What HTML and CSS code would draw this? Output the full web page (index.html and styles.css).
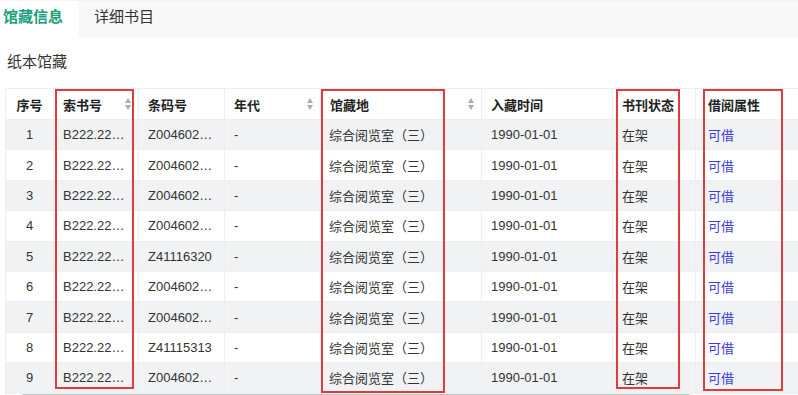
FILE: index.html
```html
<!DOCTYPE html>
<html lang="zh">
<head>
<meta charset="utf-8">
<title>馆藏信息</title>
<link rel="stylesheet" href="styles.css">
</head>
<body>
<div class="page">
  <div class="tabs">
    <div class="tab active">馆藏信息</div>
    <div class="tab">详细书目</div>
  </div>
  <div class="section-title">纸本馆藏</div>
  <div class="table-wrap">
    <table class="grid">
      <colgroup>
        <col class="c1"><col class="c2"><col class="c3"><col class="c4"><col class="c5"><col class="c6"><col class="c7"><col class="c8">
      </colgroup>
      <thead>
        <tr>
          <th class="center">序号</th>
          <th><div class="th-in"><span>索书号</span><span class="sort"></span></div></th>
          <th>条码号</th>
          <th><div class="th-in"><span>年代</span><span class="sort"></span></div></th>
          <th><div class="th-in"><span>馆藏地</span><span class="sort"></span></div></th>
          <th>入藏时间</th>
          <th>书刊状态</th>
          <th class="pl">借阅属性</th>
        </tr>
      </thead>
      <tbody>
        <tr><td class="center">1</td><td>B222.22…</td><td>Z004602…</td><td>-</td><td>综合阅览室（三）</td><td>1990-01-01</td><td>在架</td><td class="pl link">可借</td></tr>
        <tr><td class="center">2</td><td>B222.22…</td><td>Z004602…</td><td>-</td><td>综合阅览室（三）</td><td>1990-01-01</td><td>在架</td><td class="pl link">可借</td></tr>
        <tr><td class="center">3</td><td>B222.22…</td><td>Z004602…</td><td>-</td><td>综合阅览室（三）</td><td>1990-01-01</td><td>在架</td><td class="pl link">可借</td></tr>
        <tr><td class="center">4</td><td>B222.22…</td><td>Z004602…</td><td>-</td><td>综合阅览室（三）</td><td>1990-01-01</td><td>在架</td><td class="pl link">可借</td></tr>
        <tr><td class="center">5</td><td>B222.22…</td><td>Z41116320</td><td>-</td><td>综合阅览室（三）</td><td>1990-01-01</td><td>在架</td><td class="pl link">可借</td></tr>
        <tr><td class="center">6</td><td>B222.22…</td><td>Z004602…</td><td>-</td><td>综合阅览室（三）</td><td>1990-01-01</td><td>在架</td><td class="pl link">可借</td></tr>
        <tr><td class="center">7</td><td>B222.22…</td><td>Z004602…</td><td>-</td><td>综合阅览室（三）</td><td>1990-01-01</td><td>在架</td><td class="pl link">可借</td></tr>
        <tr><td class="center">8</td><td>B222.22…</td><td>Z41115313</td><td>-</td><td>综合阅览室（三）</td><td>1990-01-01</td><td>在架</td><td class="pl link">可借</td></tr>
        <tr><td class="center">9</td><td>B222.22…</td><td>Z004602…</td><td>-</td><td>综合阅览室（三）</td><td>1990-01-01</td><td>在架</td><td class="pl link">可借</td></tr>
      </tbody>
    </table>
  </div>
  <div class="scrollbar"></div>

  <div class="mark m1"></div>
  <div class="mark m2"></div>
  <div class="mark m3"></div>
  <div class="mark m4"></div>
</div>
</body>
</html>
```

FILE: styles.css
```css
html, body {
  margin: 0;
  padding: 0;
  background: #ffffff;
  overflow: hidden;
}
body {
  font-family: "Liberation Sans", "Noto Sans CJK SC", sans-serif;
  color: #333333;
}
.page {
  position: relative;
  width: 798px;
  height: 395px;
  overflow: hidden;
}
.tabs {
  display: flex;
  height: 37px;
  background: #f8f8f8;
  border-top: 1px solid #f3f3f3;
  box-sizing: border-box;
}
.tab {
  font-family: "Noto Sans CJK SC", sans-serif;
  font-size: 15px;
  line-height: 30px;
  padding: 0 15px;
  color: #333333;
  white-space: nowrap;
}
.tab.active {
  background: #ffffff;
  color: #17a07b;
  font-weight: bold;
  padding: 0 16px 0 3px;
}
.section-title {
  font-family: "Noto Sans CJK SC", sans-serif;
  font-size: 15px;
  color: #333333;
  padding: 14px 0 0 7px;
  height: 37px;
  line-height: 20px;
  box-sizing: border-box;
}
.table-wrap {
  margin-left: 5px;
  margin-top: 14px;
  width: 793px;
  overflow: hidden;
}
.grid {
  border-collapse: collapse;
  table-layout: fixed;
  width: 820px;
  font-size: 13px;
}
.c1 { width: 48px; }
.c2 { width: 85px; }
.c3 { width: 86px; }
.c4 { width: 96px; }
.c5 { width: 161px; }
.c6 { width: 131px; }
.c7 { width: 83px; }
.c8 { width: 130px; }
.grid th, .grid td {
  border: 1px solid #ebeef3;
  padding: 0 9px;
  text-align: left;
  white-space: nowrap;
  overflow: hidden;
}
.grid th {
  height: 30px;
  font-family: "Noto Sans CJK SC", sans-serif;
  font-weight: bold;
  color: #222222;
  background: #ffffff;
}
.grid td {
  height: 29.4px;
  color: #333333;
}
.grid td:nth-child(5), .grid td:nth-child(7), .grid td.link {
  font-family: "Noto Sans CJK SC", sans-serif;
}
.grid td:nth-child(5) { padding-left: 8px; }
.grid tbody tr:nth-child(odd) td { background: #f1f2f4; }
.grid .center { text-align: center; padding: 0; }
.grid .pl { padding-left: 12px; }
.grid .link { color: #3d3ddf; }
.th-in {
  display: flex;
  align-items: center;
  justify-content: space-between;
}
.sort {
  position: relative;
  width: 8px;
  height: 12px;
  margin-right: -3px;
}
.sort::before, .sort::after {
  content: "";
  position: absolute;
  left: 1px;
  border-left: 3.5px solid transparent;
  border-right: 3.5px solid transparent;
}
.sort::before {
  top: 0;
  border-bottom: 5px solid #a8acb3;
}
.sort::after {
  bottom: 0;
  border-top: 5px solid #a8acb3;
}
.scrollbar {
  margin-left: 22px;
  width: 668px;
  height: 3px;
  border-radius: 2px;
  background: #c6c6c6;
}
.mark {
  position: absolute;
  border: 2px solid #e23b3b;
  box-sizing: border-box;
}
.m1 { left: 55px; top: 89px; width: 79px; height: 300px; }
.m2 { left: 321px; top: 89px; width: 124px; height: 304px; }
.m3 { left: 616px; top: 89px; width: 64px; height: 300px; }
.m4 { left: 703px; top: 89px; width: 80px; height: 302px; }
```
